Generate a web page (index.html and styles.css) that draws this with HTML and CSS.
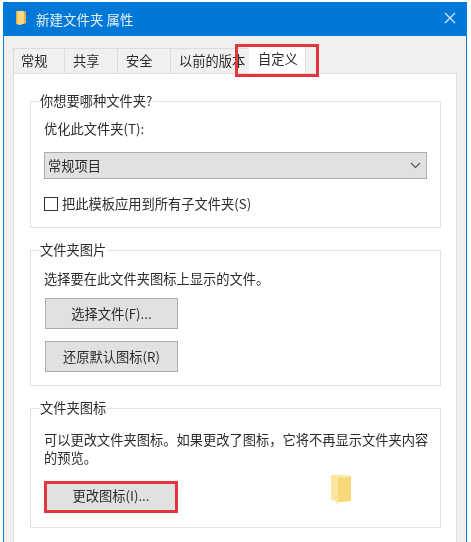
FILE: index.html
```html
<!DOCTYPE html>
<html lang="zh-CN">
<head>
    <meta charset="UTF-8">
    <meta name="viewport" content="width=device-width, initial-scale=1.0">
    <title>新建文件夹 属性</title>
    <link rel="stylesheet" href="styles.css">
</head>
<body>
    <div class="window">
        <div class="titlebar">
            <svg class="title-icon" width="10" height="15" viewBox="0 0 10 15">
                <path d="M0 0h7l3 1v11l-6 2-4-1z" fill="#f8d982"/>
                <path d="M0 0h1.500v13H0zM8 1l2 0v11l-2 .6z" fill="#e6b045"/>
            </svg>
            <span class="title-text">新建文件夹 属性</span>
            <svg class="title-close" width="12" height="12" viewBox="0 0 12 12">
                <path d="M1 1l10 10M11 1L1 11" stroke="#d5e8f7" stroke-width="1.300" fill="none"/>
            </svg>
        </div>
        <div class="content">
            <div class="tabs">
                <div class="tab tab-first">常规</div>
                <div class="tab">共享</div>
                <div class="tab">安全</div>
                <div class="tab tab-wide">以前的版本</div>
                <div class="tab tab-active">自定义<span class="mark mark-tab"></span></div>
            </div>
            <div class="panel">
                <fieldset class="group group-type">
                    <legend>你想要哪种文件夹?</legend>
                    <div class="field-label">优化此文件夹(T):</div>
                    <div class="select">
                        <span>常规项目</span>
                        <svg width="11" height="7" viewBox="0 0 11 7">
                            <path d="M1 1l4.500 4.500L10 1" stroke="#555" stroke-width="1.200" fill="none"/>
                        </svg>
                    </div>
                    <div class="check-row">
                        <span class="checkbox"></span>
                        <span>把此模板应用到所有子文件夹(S)</span>
                    </div>
                </fieldset>
                <fieldset class="group group-picture">
                    <legend>文件夹图片</legend>
                    <div class="hint">选择要在此文件夹图标上显示的文件。</div>
                    <div class="btn btn-choose">选择文件(F)...</div>
                    <div class="btn btn-restore">还原默认图标(R)</div>
                </fieldset>
                <fieldset class="group group-icon">
                    <legend>文件夹图标</legend>
                    <div class="hint hint-wrap">可以更改文件夹图标。如果更改了图标，它将不再显示文件夹内容的预览。</div>
                    <div class="icon-row">
                        <div class="btn btn-change">更改图标(I)...<span class="mark mark-btn"></span></div>
                        <svg class="folder" width="21" height="31" viewBox="0 0 21 31">
                            <path d="M0 1h13l7 1v25l-12 1-2 3-1-4-5-1z" fill="#fbe7a0"/>
                            <path d="M7 4h10l3-2v25l-12 1-1-3z" fill="#f8d878"/>
                        </svg>
                    </div>
                </fieldset>
            </div>
        </div>
    </div>
</body>
</html>
```

FILE: styles.css
```css
* {
    box-sizing: border-box;
}
body {
    margin: 0;
    height: 542px;
    overflow: hidden;
    background: #fff;
    color: #2b2b2b;
    font-family: "Noto Sans CJK SC", "Liberation Sans", sans-serif;
    font-size: 13.250px;
    line-height: 18px;
}
.window {
    margin: 2px 4px 0 3px;
    height: 540px;
    background: #f0f0f0;
    border-left: 1px solid #1a7fc8;
    border-right: 1px solid #1a7fc8;
    filter: blur(0.4px);
}
.titlebar {
    display: flex;
    align-items: center;
    height: 34px;
    margin: 0 -1px;
    padding: 0 11px 2px 13px;
    background: #0078d7;
    color: #e6f1fa;
}
.title-icon {
    margin-right: 10px;
}
.title-text {
    flex: 1;
    margin-top: 2px;
    font-size: 13.500px;
}
.content {
    padding: 12px 9px 0 9px;
}
.tabs {
    display: flex;
    height: 25px;
    position: relative;
}
.tab {
    width: 53px;
    padding: 3px 0 0 8px;
    background: #f0f0f0;
    border: 1px solid #dcdcdc;
    border-bottom: none;
    border-left: none;
}
.tab-first {
    width: 52px;
    padding-left: 7px;
    border-left: 1px solid #dcdcdc;
}
.tab-wide {
    width: 78px;
    border-right: none;
    white-space: nowrap;
}
.tab-active {
    position: relative;
    width: 57px;
    height: 27px;
    margin-top: -2px;
    padding: 3px 0 0 9px;
    background: #fff;
    z-index: 1;
}
.mark {
    position: absolute;
    border: 3px solid #e0363c;
}
.mark-tab {
    left: -14px;
    top: -3px;
    width: 84px;
    height: 33px;
}
.panel {
    height: 470px;
    padding: 18px 15px 0 16px;
    background: #fff;
    border: 1px solid #dfdfdf;
}
.group {
    margin: 0;
    padding: 0 13px;
    border: 1px solid #e2e2e2;
    min-width: 0;
}
.group legend {
    margin-left: -4px;
    padding: 0 1px 0 0;
    line-height: 18px;
}
.group-type {
    height: 136px;
}
.group-picture {
    height: 145px;
    margin-top: 13px;
}
.group-icon {
    height: 129px;
    margin-top: 13px;
}
.field-label {
    margin-top: 10px;
}
.select {
    display: flex;
    align-items: center;
    justify-content: space-between;
    height: 27px;
    margin-top: 14px;
    padding: 0 5px 0 3px;
    background: #e1e1e1;
    border: 1px solid #adadad;
}
.check-row {
    display: flex;
    align-items: center;
    gap: 4px;
    margin-top: 16px;
}
.checkbox {
    width: 14px;
    height: 14px;
    background: #fff;
    border: 1px solid #333;
}
.hint {
    margin-top: 11px;
}
.hint-wrap {
    margin-top: 14px;
    margin-right: -6px;
}
.btn {
    position: relative;
    width: 133px;
    height: 31px;
    line-height: 29px;
    text-align: center;
    background: #e1e1e1;
    border: 1px solid #adadad;
}
.btn-choose {
    margin-top: 10px;
    margin-left: 1px;
}
.btn-restore {
    margin-top: 12px;
    margin-left: 1px;
}
.icon-row {
    display: flex;
    margin-top: 14px;
}
.btn-change {
    width: 134px;
    height: 32px;
    line-height: 30px;
    border: none;
}
.mark-btn {
    left: 0;
    top: 0;
    width: 134px;
    height: 32px;
}
.folder {
    margin: -7px 0 0 153px;
}
```
